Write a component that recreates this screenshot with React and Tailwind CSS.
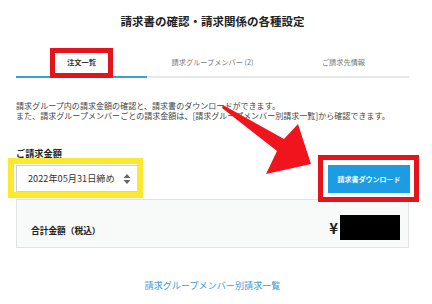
export default function App() {
  const font = { fontFamily: '"Noto Sans CJK JP", "Noto Sans", sans-serif' };
  return (
    <div className="relative w-[432px] h-[304px] bg-white overflow-hidden text-[#333]" style={font}>
      <div className="ml-[16px] w-[393px] flex flex-col">
        <h1 className="mt-[15px] h-[12px] text-center text-[11.5px] leading-[12px] font-bold text-[#222]">
          請求書の確認・請求関係の各種設定
        </h1>
        <div className="mt-[21px] grid grid-cols-3 h-[30px]">
          <div className="flex items-center justify-center border-b-[2px] border-[#3ba0da] text-[7.3px] font-bold text-[#333]">
            注文一覧
          </div>
          <div className="flex items-center justify-center border-b-[2px] border-[#e8e8e8] text-[7.2px] text-[#777]">
            請求グループメンバー (2)
          </div>
          <div className="flex items-center justify-center border-b-[2px] border-[#e8e8e8] text-[7.2px] text-[#777]">
            ご請求先情報
          </div>
        </div>
        <div className="mt-[23px] text-[8.05px] leading-[10px] text-[#444] whitespace-nowrap">
          <p>請求グループ内の請求金額の確認と、請求書のダウンロードができます。</p>
          <p>また、請求グループメンバーごとの請求金額は、[請求グループメンバー別請求一覧]から確認できます。</p>
        </div>
        <div className="mt-[27px] text-[9.2px] leading-[10px] font-bold text-[#222]">ご請求金額</div>
        <div className="mt-[7px] flex justify-between items-start">
          <div className="w-[123px] h-[27px] border border-[#d0d0d0] bg-white flex items-center justify-between pl-[11px] pr-[7px]">
            <span className="text-[9.2px] text-[#333] whitespace-nowrap">2022年05月31日締め</span>
            <svg width="8" height="12" viewBox="0 0 8 12">
              <path d="M4 1 L7.5 5 H0.5 Z" fill="#666" />
              <path d="M4 11 L7.5 7 H0.5 Z" fill="#666" />
            </svg>
          </div>
          <button className="mr-[-1px] w-[82px] h-[28px] bg-[#1c9ce2] text-white text-[7px] font-bold flex items-center justify-center">
            請求書ダウンロード
          </button>
        </div>
        <div className="mt-[6px] h-[49px] border border-[#e2e2e2] bg-[#f8f9f9] flex items-stretch justify-between pl-[14px] pr-[8px] pt-[15px] pb-[7px]">
          <span className="mt-[7px] self-center text-[8.7px] font-bold text-[#222]">合計金額（税込）</span>
          <div className="flex items-center gap-[2px]">
            <span className="text-[15px] font-bold leading-[16px] text-[#222]">¥</span>
            <div className="w-[60px] h-[25px] bg-black" />
          </div>
        </div>
        <div className="mt-[32px] text-center text-[9.1px] leading-[10px] text-[#3b9bd8]">
          請求グループメンバー別請求一覧
        </div>
      </div>

      {/* annotations */}
      <div className="absolute left-[50px] top-[48px] w-[63px] h-[30px] border-[5px] border-[#e3141c]" />
      <div className="absolute left-[8px] top-[158px] w-[135px] h-[40px] border-[6px] border-[#fbe830]" />
      <div className="absolute left-[318px] top-[155px] w-[101px] h-[47px] border-[5px] border-[#e3141c]" />
      <svg className="absolute left-0 top-0" width="432" height="304" viewBox="0 0 432 304">
        <polygon points="223,105 284,139 298,124 311,164 266,174 277,151 222,108" fill="#f0141c" />
      </svg>
    </div>
  );
}
